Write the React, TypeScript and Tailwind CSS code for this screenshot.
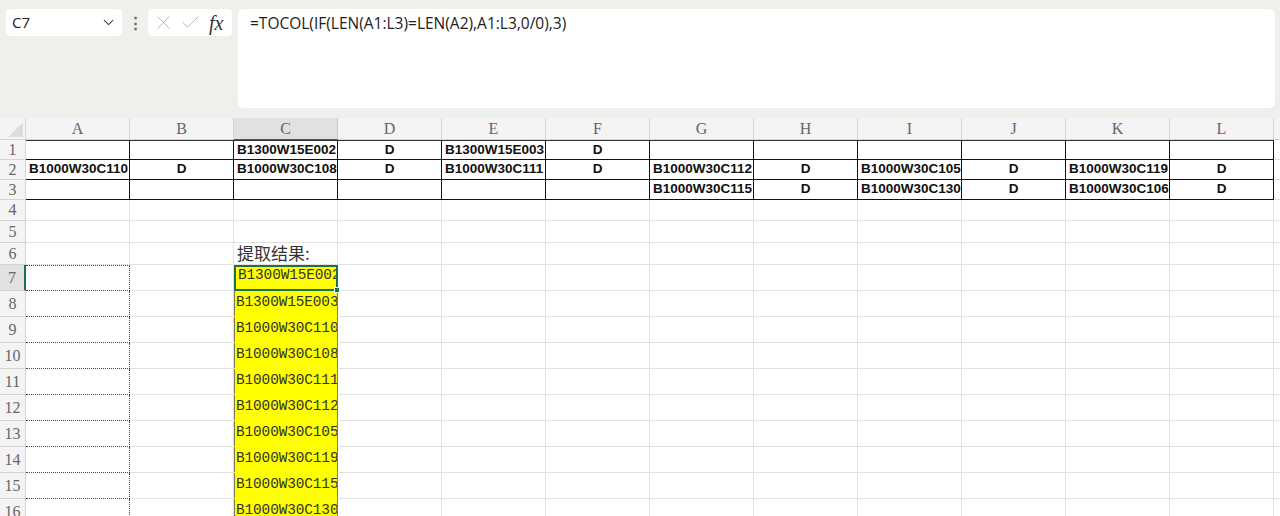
import { Check, ChevronDown, X } from 'lucide-react'
import clsx from 'clsx'

const COLS = ['A', 'B', 'C', 'D', 'E', 'F', 'G', 'H', 'I', 'J', 'K', 'L']

const TABLE: Record<number, Record<string, string>> = {
  1: { C: 'B1300W15E002', D: 'D', E: 'B1300W15E003', F: 'D' },
  2: {
    A: 'B1000W30C110',
    B: 'D',
    C: 'B1000W30C108',
    D: 'D',
    E: 'B1000W30C111',
    F: 'D',
    G: 'B1000W30C112',
    H: 'D',
    I: 'B1000W30C105',
    J: 'D',
    K: 'B1000W30C119',
    L: 'D',
  },
  3: { G: 'B1000W30C115', H: 'D', I: 'B1000W30C130', J: 'D', K: 'B1000W30C106', L: 'D' },
}

const RESULTS = [
  'B1300W15E002',
  'B1300W15E003',
  'B1000W30C110',
  'B1000W30C108',
  'B1000W30C111',
  'B1000W30C112',
  'B1000W30C105',
  'B1000W30C119',
  'B1000W30C115',
  'B1000W30C130',
]

const ROW_HEIGHTS: Record<number, string> = {
  1: 'h-[20px]',
  2: 'h-[20px]',
  3: 'h-[20px]',
  4: 'h-[21px]',
  5: 'h-[22px]',
  6: 'h-[22px]',
}

function FormulaBar() {
  return (
    <div className="flex h-[118px] items-start bg-[#eef0eb] pt-[9px] pl-[6px]">
      <div className="flex h-[27px] w-[116px] items-center justify-between rounded-[4px] bg-white pr-[5px] pl-[6px] font-['Open_Sans'] text-[15px] text-[#222]">
        <span>C7</span>
        <ChevronDown size={17} strokeWidth={1.6} className="text-[#444]" />
      </div>
      <span className="ml-[9px] flex h-[27px] w-[8px] items-center justify-center text-[15px] font-bold text-[#666]">
        ⋮
      </span>
      <div className="ml-[9px] flex h-[27px] w-[84px] items-center gap-[4px] rounded-[4px] bg-white pl-[4px]">
        <X size={23} strokeWidth={1} className="text-[#b8b8b8]" />
        <Check size={23} strokeWidth={1} className="text-[#b8b8b8]" />
        <span className="ml-[3px] font-['Liberation_Serif'] text-[20px] leading-none text-[#333] italic">fx</span>
      </div>
      <div className="ml-[6px] h-[99px] w-[1037px] rounded-[5px] bg-white px-[12px] pt-[3px] font-['Open_Sans'] text-[15.5px] text-[#222]">
        =TOCOL(IF(LEN(A1:L3)=LEN(A2),A1:L3,0/0),3)
      </div>
    </div>
  )
}

function HeaderRow() {
  return (
    <div className="flex h-[22px] bg-[#f4f4f4] font-['Liberation_Serif'] text-[16px] text-[#666]">
      <div className="relative h-full w-[26px] shrink-0 border-r border-b border-[#d4d4d4]">
        <div className="absolute right-[2px] bottom-[2px] h-[14px] w-[14px] bg-[linear-gradient(135deg,transparent_50%,#dcdcdc_50%)]" />
      </div>
      {COLS.map((c) => (
        <div
          key={c}
          className={clsx(
            'flex h-full w-[104px] shrink-0 items-center justify-center border-r border-b',
            c === 'C' ? 'border-r-[#c8c8c8] border-b-[#1f7145] bg-[#e1e1e1]' : 'border-[#d4d4d4]',
          )}
        >
          {c}
        </div>
      ))}
      <div className="h-full flex-1 border-b border-[#d4d4d4]" />
    </div>
  )
}

function GridRow({ r }: { r: number }) {
  const height = ROW_HEIGHTS[r] ?? 'h-[26px]'
  const inTable = r <= 3
  const isResult = r >= 7
  const selected = r === 7
  return (
    <div className={clsx('flex', height)}>
      <div
        className={clsx(
          'flex h-full w-[26px] shrink-0 items-center justify-center border-b font-["Liberation_Serif"] text-[16px] text-[#666]',
          selected
            ? 'border-r-2 border-r-[#1f7145] border-b-[#d4d4d4] bg-[#e1e1e1]'
            : 'border-r border-[#d4d4d4] bg-[#f4f4f4]',
        )}
      >
        {r}
      </div>
      {COLS.map((c) => {
        const value = TABLE[r]?.[c]
        const isD = value === 'D'
        if (isResult && c === 'A') {
          return (
            <div
              key={c}
              className={clsx(
                'h-full w-[104px] shrink-0 border-r border-b border-dotted border-[#444]',
                selected && 'border-t',
              )}
            />
          )
        }
        if (isResult && c === 'C') {
          return (
            <div
              key={c}
              className={clsx(
                'relative flex h-full w-[104px] shrink-0 items-end overflow-hidden bg-[#ffff00] pb-[2px] pl-[2px] font-["Liberation_Mono"] text-[14.4px] tracking-[-0.1px] whitespace-nowrap text-[#333]',
                selected
                  ? 'border-2 border-[#1f7145] pl-[1px]'
                  : 'border-r border-b border-r-[#7c7c50] border-b-[#ffff00] shadow-[inset_1px_0_0_#7c7c50]',
              )}
            >
              {RESULTS[r - 7]}
            </div>
          )
        }
        return (
          <div
            key={c}
            className={clsx(
              'flex h-full w-[104px] shrink-0 items-center border-r border-b whitespace-nowrap',
              inTable ? 'border-[#111]' : 'border-[#e1e1e1]',
              inTable && r === 1 && 'border-t border-t-[#333]',
              isD ? 'justify-center' : 'pl-[3px]',
              'font-["Liberation_Sans"] text-[13.5px] font-bold text-[#111]',
            )}
          >
            {r === 6 && c === 'C' ? (
              <span className="self-end pb-[0px] font-['Noto_Sans_CJK_SC',serif] text-[17px] leading-[22px] font-normal text-[#333]">
                提取结果:
              </span>
            ) : (
              value
            )}
          </div>
        )
      })}
      <div className="h-full flex-1 border-b border-[#e1e1e1]" />
    </div>
  )
}

export default function App() {
  const rows = Array.from({ length: 16 }, (_, i) => i + 1)
  return (
    <div className="relative h-[516px] w-[1280px] overflow-hidden bg-white">
      <FormulaBar />
      <HeaderRow />
      {rows.map((r) => (
        <GridRow key={r} r={r} />
      ))}
      <div className="pointer-events-none absolute top-[287px] left-[334px] h-[6px] w-[6px] border border-white bg-[#1f7145]" />
    </div>
  )
}
